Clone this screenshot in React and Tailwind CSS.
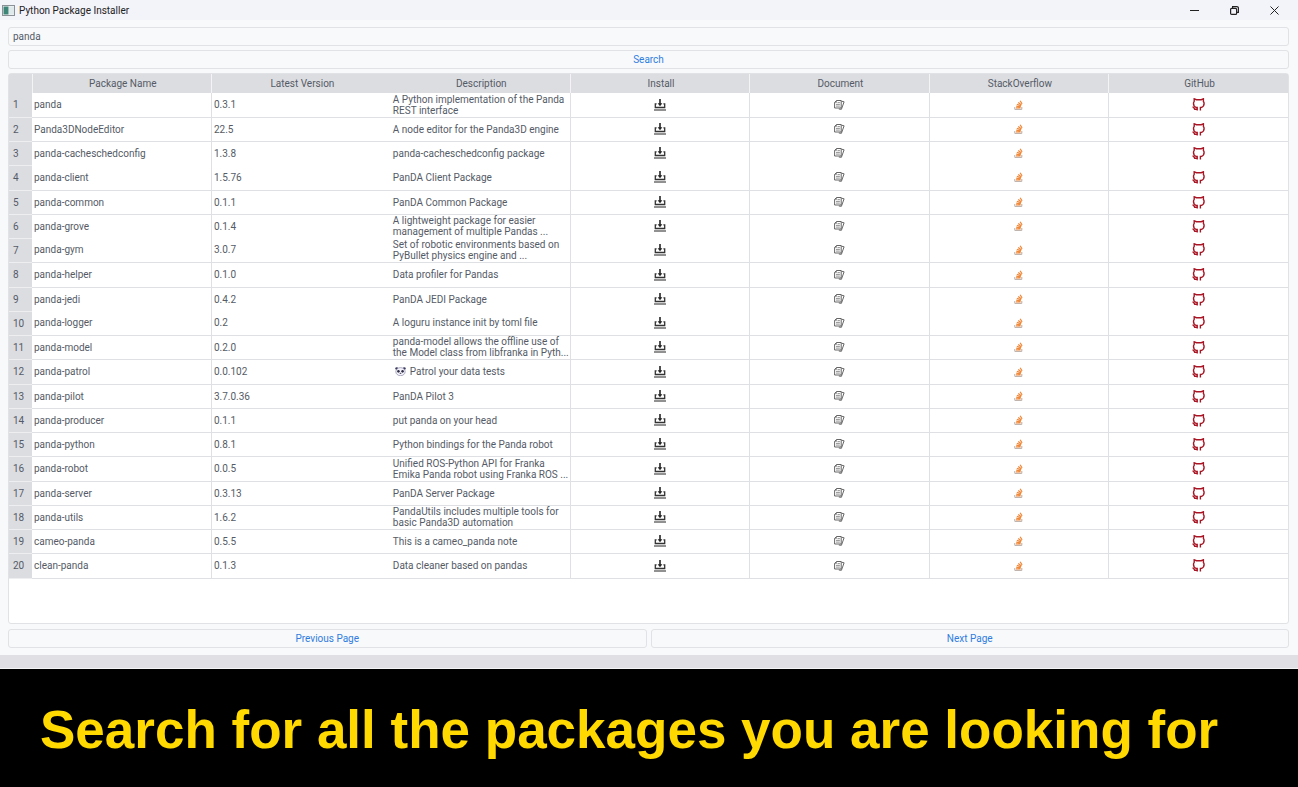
import React from "react";

const rows = [
  ["panda", "0.3.1", "A Python implementation of the Panda\nREST interface"],
  ["Panda3DNodeEditor", "22.5", "A node editor for the Panda3D engine"],
  ["panda-cacheschedconfig", "1.3.8", "panda-cacheschedconfig package"],
  ["panda-client", "1.5.76", "PanDA Client Package"],
  ["panda-common", "0.1.1", "PanDA Common Package"],
  ["panda-grove", "0.1.4", "A lightweight package for easier\nmanagement of multiple Pandas ..."],
  ["panda-gym", "3.0.7", "Set of robotic environments based on\nPyBullet physics engine and ..."],
  ["panda-helper", "0.1.0", "Data profiler for Pandas"],
  ["panda-jedi", "0.4.2", "PanDA JEDI Package"],
  ["panda-logger", "0.2", "A loguru instance init by toml file"],
  ["panda-model", "0.2.0", "panda-model allows the offline use of\nthe Model class from libfranka in Pyth..."],
  ["panda-patrol", "0.0.102", "Patrol your data tests", true],
  ["panda-pilot", "3.7.0.36", "PanDA Pilot 3"],
  ["panda-producer", "0.1.1", "put panda on your head"],
  ["panda-python", "0.8.1", "Python bindings for the Panda robot"],
  ["panda-robot", "0.0.5", "Unified ROS-Python API for Franka\nEmika Panda robot using Franka ROS ..."],
  ["panda-server", "0.3.13", "PanDA Server Package"],
  ["panda-utils", "1.6.2", "PandaUtils includes multiple tools for\nbasic Panda3D automation"],
  ["cameo-panda", "0.5.5", "This is a cameo_panda note"],
  ["clean-panda", "0.1.3", "Data cleaner based on pandas"],
];

const openRows = ["panda-cacheschedconfig", "panda-grove", "panda-jedi"];

const columns = ["Package Name", "Latest Version", "Description", "Install", "Document", "StackOverflow", "GitHub"];

function AppIcon() {
  return (
    <svg width="13" height="11" viewBox="0 0 13 11" aria-hidden="true">
      <rect x="0.5" y="0.5" width="12" height="10" fill="#f4f6f8" stroke="#8b9196" />
      <rect x="1.5" y="1.5" width="5" height="8" fill="#3c8577" />
      <rect x="7" y="1.5" width="5" height="8" fill="#dfe9ec" />
    </svg>
  );
}

function DownloadIcon() {
  return (
    <svg width="12" height="12" viewBox="0 0 12 12" fill="none" aria-hidden="true">
      <path d="M6 0v5" stroke="#222" strokeWidth="1.6" />
      <path d="M3.6 4.2h4.8L6 7.2z" fill="#222" />
      <path d="M2.6 4.8H1.3v3.7h9.4V4.8H9.400" stroke="#333" strokeWidth="1.3" />
      <path d="M0 11h12" stroke="#555" strokeWidth="1.3" />
    </svg>
  );
}

function DocumentIcon() {
  return (
    <svg width="11" height="10" viewBox="0 0 11 10" fill="none" aria-hidden="true">
      <path d="M4.800 9l2.600.3 2.700-7.500-2.600-.6" stroke="#555" strokeWidth=".9" fill="#fff" />
      <path d="M2.500.5h4.700v7.500H.6V2.400z" stroke="#555" strokeWidth=".9" fill="#fff" />
      <path d="M2.500.5v1.900H.6M3.500 2.600h2.400M2 4.400h3.900M2 6.100h3.900" stroke="#777" strokeWidth=".8" />
    </svg>
  );
}

function StackIcon() {
  return (
    <svg width="9" height="10" viewBox="0 0 9 10" fill="none" aria-hidden="true">
      <path d="M.8 7v2.400h7V7" stroke="#b9aca4" strokeWidth="1" />
      <path d="M2 7.900h4.600M2.200 6.100l4.500.8M2.900 4.200l4.200 1.700M4.200 2.400l3.300 2.500M6.100.7l2 3.200" stroke="#f0883a" strokeWidth="1.200" />
    </svg>
  );
}

function GithubIcon() {
  return (
    <svg width="13" height="13" viewBox="0 0 13 13" fill="none" stroke="#a81524" strokeWidth="1.4" aria-hidden="true">
      <path d="M5.200 12.500V9.400H4.100C2.300 8.700 1.500 7.400 1.500 5.500c0-.9.3-1.600.7-2.100V.8l2.200.9h4.800l2.200-.9v2.600c.5.500.7 1.200.7 2.100 0 1.900-.8 3.200-2.600 3.900H8.400v3.100" />
      <path d="M.5 8.900l1.200.4 1 1.900h2.500" />
    </svg>
  );
}

function PandaIcon() {
  return (
    <svg className="mr-1 ml-0.5 inline-block align-[-1px]" width="11" height="9" viewBox="0 0 12 10" role="img" aria-label="panda">
      <circle cx="1.800" cy="1.800" r="1.600" fill="#3d3c60" />
      <circle cx="10.200" cy="1.800" r="1.600" fill="#3d3c60" />
      <ellipse cx="6" cy="5.200" rx="5.200" ry="4.500" fill="#f3f2fa" stroke="#7d7c9c" strokeWidth=".7" />
      <ellipse cx="3.700" cy="4.800" rx="1.400" ry="1.500" fill="#2d2c45" />
      <ellipse cx="8.300" cy="4.800" rx="1.400" ry="1.500" fill="#2d2c45" />
      <ellipse cx="6" cy="7" rx="1" ry=".6" fill="#2d2c45" />
    </svg>
  );
}

const actions = [
  ["Install", DownloadIcon],
  ["Documentation for", DocumentIcon],
  ["StackOverflow questions on", StackIcon],
  ["GitHub page of", GithubIcon],
];

const box = "rounded-[3px] border border-[#e0e2e6] bg-[#f8f9fb]";

export default function App() {
  return (
    <div className="flex min-h-screen flex-col bg-black font-[Roboto,sans-serif] text-[10px] text-[#555b66]">
      <div className="flex flex-col bg-[#f8f9fb]">
        <header className="flex h-5 items-center bg-[#f3f3fa] pl-0.5">
          <AppIcon />
          <h1 className="ml-1 flex-1 text-[10px] text-[#222]">Python Package Installer</h1>
          <div className="mr-1 flex text-[#222]">
            <button aria-label="Minimize" className="flex h-5 w-10 items-center justify-center">
              <svg width="9" height="9" viewBox="0 0 9 9" stroke="currentColor"><path d="M0 4.500h9" /></svg>
            </button>
            <button aria-label="Restore" className="flex h-5 w-10 items-center justify-center">
              <svg width="9" height="9" viewBox="0 0 9 9" fill="none" stroke="currentColor" strokeWidth="1.200">
                <rect x=".6" y="2.400" width="6" height="6" rx="1" />
                <path d="M2.600 2V.6h4.300a1.500 1.500 0 0 1 1.500 1.500v4.300H7" />
              </svg>
            </button>
            <button aria-label="Close" className="flex h-5 w-10 items-center justify-center">
              <svg width="9" height="9" viewBox="0 0 9 9" stroke="currentColor"><path d="M.5.5l8 8M8.500.5l-8 8" /></svg>
            </button>
          </div>
        </header>

        <main className="flex flex-col pt-[7px] pr-[9px] pb-[7px] pl-2">
          <input aria-label="Package to search" defaultValue="panda" className={`h-[19px] px-1 outline-none ${box}`} />
          <button className={`mt-1 h-[19px] text-[#2f7de0] ${box}`}>Search</button>

          <div className="mt-1 rounded-[3px] border border-[#e0e2e6] bg-white pb-11">
            <table className="w-full table-fixed border-collapse">
              <thead>
                <tr className="h-[19px] bg-[#dcdde1]">
                  <td className="w-[23px] border-r border-[#f4f4f6] p-0" />
                  {columns.map((c) => (
                    <th
                      key={c}
                      scope="col"
                      className="border-r border-[#f4f4f6] p-0 pl-0.5 font-normal last:border-r-0 nth-[3]:border-r-0"
                    >
                      {c}
                    </th>
                  ))}
                </tr>
              </thead>
              <tbody>
                {rows.map(([name, version, text, icon], i) => (
                  <tr
                    key={name}
                    className={`h-6 nth-[4n]:h-[25px] ${openRows.includes(name) ? "" : "border-b border-[#dfe0e4]"}`}
                  >
                    <th scope="row" className="border-b border-[#eeeef1] bg-[#dcdde1] p-0 pl-1 text-left font-normal">
                      {i + 1}
                    </th>
                    <td className="border-r border-[#dfe0e4] p-0 pl-0.5">{name}</td>
                    <td className="p-0 pl-0.5">{version}</td>
                    <td className="border-r border-[#dfe0e4] p-0 pl-0.5 leading-[11px] whitespace-pre">
                      {icon && <PandaIcon />}
                      {text}
                    </td>
                    {actions.map(([label, Icon]) => (
                      <td key={label} className="border-r border-[#dfe0e4] p-0 last:border-r-0">
                        <button aria-label={`${label} ${name}`} className="mx-auto block">
                          <Icon />
                        </button>
                      </td>
                    ))}
                  </tr>
                ))}
              </tbody>
            </table>
          </div>

          <div className="mt-[5px] grid grid-cols-2 gap-1 text-[#2f7de0]">
            <button className={`h-[19px] ${box}`}>Previous Page</button>
            <button className={`h-[19px] ${box}`}>Next Page</button>
          </div>
        </main>
        <footer className="h-[14px] border-b border-[#f4f4f6] bg-[#e0e0e4]" />
      </div>

      <p className="flex flex-1 items-center pt-1 pl-10 font-['Liberation_Sans',sans-serif] text-[53px] font-bold whitespace-nowrap text-[#ffd900]">
        Search for all the packages you are looking for
      </p>
    </div>
  );
}
